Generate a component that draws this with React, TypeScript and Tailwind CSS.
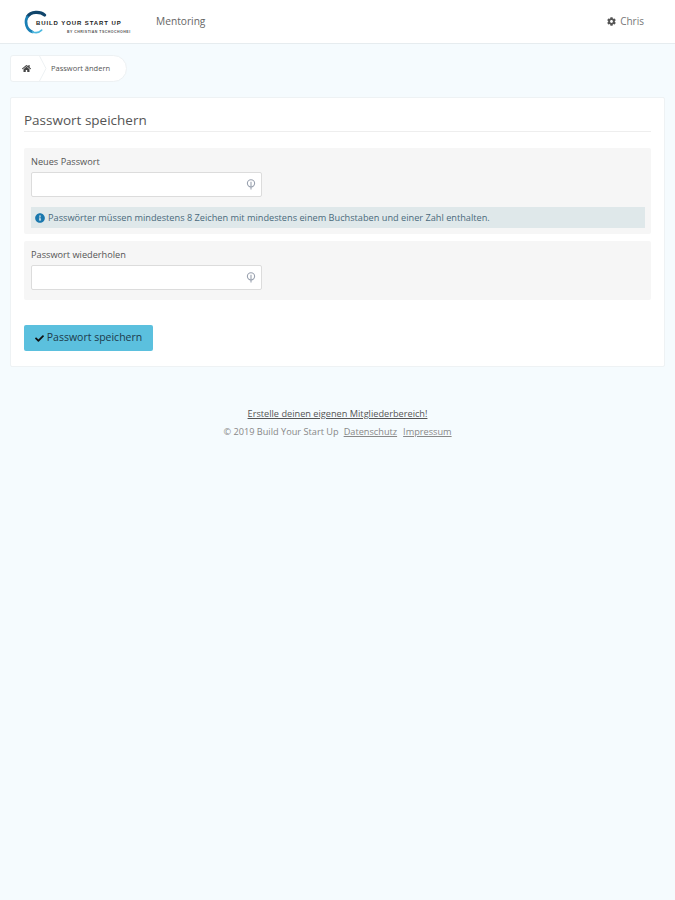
import React from 'react';
import { FaHome, FaCheck, FaInfoCircle, FaCog } from 'react-icons/fa';

const KeyIcon = () => (
  <svg viewBox="0 0 12 14" className="w-[10px] h-[11px] text-gray-400" fill="none" stroke="currentColor" strokeWidth="1.4">
    <circle cx="6" cy="5.5" r="4.6" />
    <path d="M6 3.5v10" />
  </svg>
);

const Logo = () => (
  <div className="relative w-[108px] h-[26px] shrink-0">
    <svg viewBox="0 0 30 30" className="absolute -left-[2px] top-0 w-[26px] h-[26px]" fill="none">
      <path d="M25 7C20 2.5 9 2.5 5 9" stroke="#10456b" strokeWidth="3.6" strokeLinecap="round" />
      <path d="M5 9C1.5 15 4 24 11 26.5" stroke="#1a7fb5" strokeWidth="3" strokeLinecap="round" />
      <path d="M11 26.5C15 28 19 27 21.5 24.5" stroke="#4cb9e0" strokeWidth="2" strokeLinecap="round" />
    </svg>
    <span className="absolute left-[11px] top-[11px] text-[6px] leading-[7px] font-bold tracking-[0.9px] text-[#222] whitespace-nowrap font-['Liberation_Sans',sans-serif]">
      BUILD YOUR START UP
    </span>
    <span className="absolute left-[42px] top-[21px] text-[3.5px] leading-[5px] font-bold tracking-[0.5px] text-[#555] whitespace-nowrap font-['Liberation_Sans',sans-serif]">
      BY CHRISTIAN TSCHOCHOHEI
    </span>
  </div>
);

const PasswordField = ({ label }: { label: string }) => (
  <div>
    <label className="block text-[9.2px] leading-[13px] text-[#555] mb-[4px]">{label}</label>
    <div className="w-[231px] h-[25px] bg-white border border-[#dcdcdc] rounded-[2px] flex items-center justify-end pr-[5px]">
      <KeyIcon />
    </div>
  </div>
);

export default function App() {
  return (
    <div className="min-h-[900px] bg-[#f5fbfe] font-['Open_Sans',sans-serif]">
      <header className="h-[44px] bg-white border-b border-[#e6ecef] flex items-center pl-[25px] pr-[31px]">
        <Logo />
        <a className="ml-[23px] text-[10.2px] text-[#666]">Mentoring</a>
        <div className="ml-auto flex items-center gap-[4px] text-[10px] text-[#777]">
          <FaCog className="w-[9px] h-[9px] text-[#555]" />
          <span>Chris</span>
        </div>
      </header>

      <div className="px-[10px] pt-[11px]">
        <nav className="relative w-[117px] h-[27px] bg-white border border-[#edf1f3] rounded-l-[3px] rounded-r-[14px] flex items-center">
          <span className="w-[31px] flex justify-center">
            <FaHome className="w-[9px] h-[9px] text-[#444]" />
          </span>
          <svg viewBox="0 0 8 27" className="w-[8px] h-[27px] -ml-[3px]" fill="none">
            <path d="M0 0l7 13.5L0 27" stroke="#edf1f3" />
          </svg>
          <span className="ml-[4px] text-[7.5px] text-[#555] whitespace-nowrap">Passwort ändern</span>
        </nav>

        <main className="mt-[15px] bg-white border border-[#eef2f4] rounded-[2px] h-[270px] px-[13px] pt-[13px]">
          <h2 className="text-[13.5px] leading-[19px] text-[#555] pb-[1px] border-b border-[#eeeeee] h-[21px]">Passwort speichern</h2>

          <section className="mt-[16px] bg-[#f6f6f6] rounded-[2px] h-[86px] pl-[7px] pr-[6px] pt-[7px]">
            <PasswordField label="Neues Passwort" />
            <div className="mt-[10px] h-[21px] bg-[#dfe8ea] flex items-center gap-[3px] pl-[4px] text-[9.2px] text-[#4a6a7c] whitespace-nowrap">
              <FaInfoCircle className="w-[10px] h-[10px] text-[#1a78ae] shrink-0" />
              <span>Passwörter müssen mindestens 8 Zeichen mit mindestens einem Buchstaben und einer Zahl enthalten.</span>
            </div>
          </section>

          <section className="mt-[7px] bg-[#f6f6f6] rounded-[2px] h-[59px] pl-[7px] pt-[7px]">
            <PasswordField label="Passwort wiederholen" />
          </section>

          <button className="mt-[25px] w-[129px] h-[26px] bg-[#5bc0de] rounded-[2px] flex items-center justify-center gap-[3px] text-[10.5px] text-[#1d3a4a] whitespace-nowrap">
            <FaCheck className="w-[9px] h-[9px] text-[#111]" />
            Passwort speichern
          </button>
        </main>

        <footer className="mt-[40px] text-center text-[9.2px] text-[#888]">
          <p className="leading-[13px]">
            <a className="underline text-[#555]">Erstelle deinen eigenen Mitgliederbereich!</a>
          </p>
          <p className="mt-[5px] leading-[13px]">
            © 2019 Build Your Start Up
            <a className="underline ml-[5px]">Datenschutz</a>
            <a className="underline ml-[6px]">Impressum</a>
          </p>
        </footer>
      </div>
    </div>
  );
}
